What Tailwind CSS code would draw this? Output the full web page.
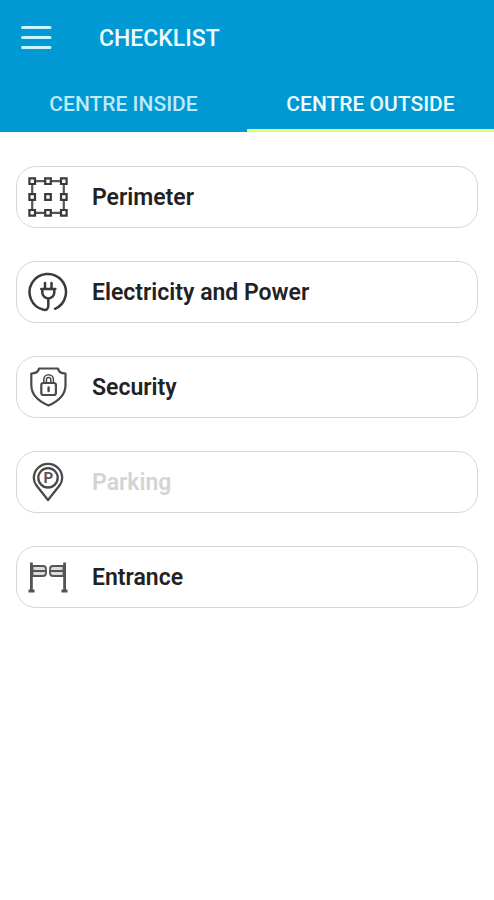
<!DOCTYPE html>
<html lang="en">
<head>
<meta charset="utf-8">
<meta name="viewport" content="width=device-width, initial-scale=1">
<title>Checklist</title>
<script src="https://cdn.jsdelivr.net/npm/@tailwindcss/browser@4"></script>
</head>
<body class="min-h-screen bg-white font-['Roboto',sans-serif] text-[#222222]">
<header class="bg-[#0099d4] text-[#effcff]">
  <div class="flex h-19 items-center gap-[47px] px-5">
    <button type="button" aria-label="Open menu" class="shrink-0">
      <svg class="block h-8 w-8" viewBox="0 0 32 32" fill="none" stroke="#c9f5ff" stroke-width="3" stroke-linecap="round"><path d="M2.5 5.5H30M2.5 15.5H30M2.5 25.5H30"/></svg>
    </button>
    <h1 class="pt-0.5 text-[23px] leading-8 font-medium">CHECKLIST</h1>
  </div>
  <nav class="grid h-14 grid-cols-2 text-center text-[21px] leading-6 font-medium">
    <a href="#inside" class="border-b-3 border-transparent pt-4 text-[#bfe9f8]">CENTRE INSIDE</a>
    <a href="#outside" aria-current="page" class="border-b-3 border-[#e4fb6b] pt-4">CENTRE OUTSIDE</a>
  </nav>
</header>
<main class="px-4 py-[34px]">
  <ul class="flex flex-col gap-[33px] text-[23px] leading-8 font-semibold">
    <li><button type="button" class="flex h-[62px] w-full items-center gap-6 rounded-[20px] border border-[#d6d6d6] px-[11px] text-left">
      <svg class="h-10 w-10 shrink-0" viewBox="0 0 40 40" fill="none" stroke="#555" stroke-width="2.2"><path d="M4.2 4.2H35.8V35.8H4.2Z"/><g fill="#fff" stroke="#3a3a3a"><path d="M1.4 1.4h5.6v5.6h-5.6zM17.2 1.4h5.6v5.6h-5.6zM33 1.4h5.6v5.6h-5.6zM1.4 17.2h5.6v5.6h-5.6zM17.2 17.2h5.6v5.6h-5.6zM33 17.2h5.6v5.6h-5.6zM1.4 33h5.6v5.6h-5.6zM17.2 33h5.6v5.6h-5.6zM33 33h5.6v5.6h-5.6z"/></g></svg>
      <span class="pt-0.5">Perimeter</span></button></li>
    <li><button type="button" class="flex h-[62px] w-full items-center gap-6 rounded-[20px] border border-[#d6d6d6] px-[11px] text-left">
      <svg class="h-10 w-10 shrink-0" viewBox="0 0 40 40" fill="none" stroke="#3a3a3a" stroke-width="2.5" stroke-linecap="round" stroke-linejoin="round"><path d="M27 36.8A18.2 18.2 0 1 0 15.5 37.8C18.5 38.3 20.3 37 20.3 34V27M13.3 17H27.3M14.3 17V20.5A6 6 0 0 0 26.3 20.5V17M17 16.5V11M23.5 16.5V11"/></svg>
      <span class="pt-0.5">Electricity and Power</span></button></li>
    <li><button type="button" class="flex h-[62px] w-full items-center gap-6 rounded-[20px] border border-[#d6d6d6] px-[11px] text-left">
      <svg class="h-10 w-10 shrink-0" viewBox="0 0 40 40" fill="none" stroke="#4a4a4a" stroke-width="2.2" stroke-linejoin="round"><path d="M11 1.5H30C30.5 4.5 33 6.5 37.5 6.5V18C37.5 27 31 34 20.5 38.5C10 34 3.3 27 3.3 18V6.5C8 6.5 10.5 4.5 11 1.5Z"/><rect x="13.3" y="16" width="14.6" height="12" rx="2"/><path d="M15.8 16V12.5A4.8 4.8 0 0 1 25.4 12.5V16M18.4 16V12.8A2.2 2.2 0 0 1 22.8 12.8V16" stroke-width="1.5"/><path d="M20.6 20.5V24" stroke-width="2.4" stroke-linecap="round"/></svg>
      <span class="pt-0.5">Security</span></button></li>
    <li><button type="button" disabled class="flex h-[62px] w-full items-center gap-6 rounded-[20px] border border-[#d6d6d6] px-[11px] text-left text-[#d4d4d4]">
      <svg class="h-10 w-10 shrink-0" viewBox="0 0 40 40" fill="none" stroke="#4a4a4a" stroke-width="2.3" stroke-linejoin="round"><path d="M20 38L8.5 23.5C6.7 21.2 5.8 18.8 5.8 16A14.2 14.2 0 0 1 34.2 16C34.2 18.8 33.3 21.2 31.5 23.5Z"/><circle cx="20" cy="15.8" r="9.7"/><text x="20.3" y="21" text-anchor="middle" class="font-['Roboto',sans-serif] text-[15px] font-bold" fill="#555" stroke="none">P</text></svg>
      <span class="pt-0.5">Parking</span></button></li>
    <li><button type="button" class="flex h-[62px] w-full items-center gap-6 rounded-[20px] border border-[#d6d6d6] px-[11px] text-left">
      <svg class="h-10 w-10 shrink-0" viewBox="0 0 40 40" fill="none" stroke="#555" stroke-width="1.8" stroke-linejoin="round"><path d="M3.4 5.5V34M36.6 5.5V34" stroke-width="2.8"/><path d="M0.5 34H6.5M33.5 34H39.5" stroke-width="3"/><path fill="#ddd" d="M4.5 9H15Q18 9 18 12V16Q18 19 15 19H4.5ZM35.5 9H25Q22 9 22 12V16Q22 19 25 19H35.5Z"/><path d="M4.5 14H18M35.5 14H22"/></svg>
      <span class="pt-0.5">Entrance</span></button></li>
  </ul>
</main>
</body>
</html>
